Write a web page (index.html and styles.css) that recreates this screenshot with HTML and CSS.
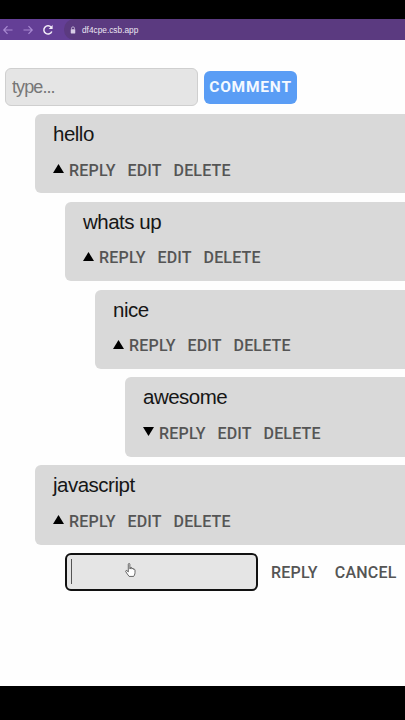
FILE: index.html
```html
<!DOCTYPE html>
<html lang="en">
<head>
  <meta charset="UTF-8">
  <meta name="viewport" content="width=device-width, initial-scale=1.0">
  <title>Comments</title>
  <link rel="stylesheet" href="styles.css">
</head>
<body>
  <div class="screen">
    <!-- Browser bar -->
    <div class="top-black"></div>
    <div class="browser-bar">
      <svg class="nav-icon" viewBox="0 0 12 12" width="12" height="12"><path d="M10.500 6H2M5.500 2.200 1.800 6l3.700 3.800" fill="none" stroke="#a98ad2" stroke-width="1.200"/></svg>
      <svg class="nav-icon" viewBox="0 0 12 12" width="12" height="12"><path d="M1.500 6H10M6.500 2.200 10.200 6l-3.700 3.800" fill="none" stroke="#a98ad2" stroke-width="1.200"/></svg>
      <svg class="nav-icon" viewBox="0 0 12 12" width="12" height="12"><path d="M9.800 7.400A4.100 4.100 0 1 1 9.200 3.400" fill="none" stroke="#f3eef8" stroke-width="1.500"/><path d="M10.600 1v3.900H6.700z" fill="#f3eef8"/></svg>
      <div class="address">
        <svg viewBox="0 0 8 10" width="6" height="8"><path d="M2 4V2.800a2 2 0 0 1 4 0V4" fill="none" stroke="#d8cde6" stroke-width="1"/><rect x="1" y="4" width="6" height="5.500" rx=".6" fill="#d8cde6"/></svg>
        <span>df4cpe.csb.app</span>
      </div>
    </div>

    <div class="page">
      <!-- New comment -->
      <div class="new-comment">
        <input class="comment-input" type="text" placeholder="type...">
        <button class="comment-btn">COMMENT</button>
      </div>

      <div class="comment-box">
        <div class="comment-text">hello</div>
        <div class="actions">
          <svg class="arrow" viewBox="0 0 11 9" width="11" height="9"><path d="M5.500 0 11 9H0z"/></svg>
          <span class="action">REPLY</span><span class="action">EDIT</span><span class="action">DELETE</span>
        </div>
      </div>
      <div class="nested">
        <div class="comment-box">
          <div class="comment-text">whats up</div>
          <div class="actions">
            <svg class="arrow" viewBox="0 0 11 9" width="11" height="9"><path d="M5.500 0 11 9H0z"/></svg>
            <span class="action">REPLY</span><span class="action">EDIT</span><span class="action">DELETE</span>
          </div>
        </div>
        <div class="nested">
          <div class="comment-box">
            <div class="comment-text">nice</div>
            <div class="actions">
              <svg class="arrow" viewBox="0 0 11 9" width="11" height="9"><path d="M5.500 0 11 9H0z"/></svg>
              <span class="action">REPLY</span><span class="action">EDIT</span><span class="action">DELETE</span>
            </div>
          </div>
          <div class="nested">
            <div class="comment-box">
              <div class="comment-text">awesome</div>
              <div class="actions">
                <svg class="arrow" viewBox="0 0 11 9" width="11" height="9"><path d="M0 0h11L5.500 9z"/></svg>
                <span class="action">REPLY</span><span class="action">EDIT</span><span class="action">DELETE</span>
              </div>
            </div>
          </div>
        </div>
      </div>

      <div class="comment-box">
        <div class="comment-text">javascript</div>
        <div class="actions">
          <svg class="arrow" viewBox="0 0 11 9" width="11" height="9"><path d="M5.500 0 11 9H0z"/></svg>
          <span class="action">REPLY</span><span class="action">EDIT</span><span class="action">DELETE</span>
        </div>
      </div>

      <!-- Reply form -->
      <div class="reply-form">
        <div class="reply-input">
          <span class="caret"></span>
          <svg class="hand" viewBox="0 0 12 16" width="11" height="16"><path d="M3.600 1.800c0-1.200 1.700-1.200 1.700 0v5l.6-.2V5.900c0-1 1.500-1 1.500 0v1l.5-.1c.2-.9 1.500-.8 1.500.2v.4c.5-.4 1.500-.2 1.500.7v2.700c0 2-1.100 3.700-1.500 4.200H4.500C3.400 13.600 1.700 11.300.9 9.900.4 9 1.300 8 2.200 8.800l1.400 1.300z" fill="#fff" stroke="#333" stroke-width=".8"/></svg>
        </div>
        <span class="action reply-action">REPLY</span>
        <span class="action reply-action">CANCEL</span>
      </div>
    </div>

    <div class="bottom-black"></div>
  </div>
</body>
</html>
```

FILE: styles.css
```css
* {
  box-sizing: border-box;
}

body {
  margin: 0;
  background-color: #fff;
  font-family: "Liberation Sans", Arial, sans-serif;
}

.screen {
  width: 405px;
  height: 720px;
  display: flex;
  flex-direction: column;
  overflow: hidden;
}

.top-black {
  height: 19px;
  background-color: #000;
}

.browser-bar {
  height: 21px;
  background-color: #643f96;
  display: flex;
  align-items: center;
  padding-left: 2px;
  gap: 8px;
}

.address {
  flex: 1;
  align-self: stretch;
  display: flex;
  align-items: center;
  gap: 6px;
  margin-left: 2px;
  padding-left: 6px;
  background-color: #5b3a80;
  border-radius: 10px 0 0 10px;
  font-size: 8.300px;
  color: #ebe5f2;
}

.page {
  flex: 1;
  padding: 28px 0 0 5px;
  background-color: #fefefe;
}

.new-comment {
  display: flex;
  align-items: center;
  gap: 6px;
  margin-bottom: 8px;
}

.comment-input {
  width: 193px;
  height: 38px;
  padding: 0 6px;
  background-color: #e5e5e5;
  border: 1px solid #cfcfcf;
  border-radius: 6px;
  font-family: inherit;
  font-size: 18px;
  letter-spacing: -0.9px;
}

.comment-input::placeholder {
  color: #777;
  opacity: 1;
}

.comment-btn {
  width: 93px;
  height: 33px;
  padding: 0;
  background-color: #5a9df5;
  color: #f5f9ff;
  border: none;
  border-radius: 6px;
  font-family: Roboto, Arial, sans-serif;
  font-size: 15.500px;
  font-weight: 700;
  letter-spacing: 0.8px;
}

.comment-box {
  width: 500px;
  height: 79.400px;
  margin: 0 0 8.400px 30px;
  padding: 8px 18px;
  background-color: #d9d9d9;
  border-radius: 6px;
}

.nested {
  margin-left: 30px;
}

.comment-text {
  height: 24px;
  font-size: 20.500px;
  line-height: 24px;
  letter-spacing: -0.5px;
  color: #161616;
}

.actions {
  display: flex;
  align-items: center;
  margin-top: 14px;
  height: 20px;
}

.arrow {
  flex-shrink: 0;
  margin: 0 5px 3px 0;
}

.action {
  margin-right: 11.700px;
  font-family: Roboto, Arial, sans-serif;
  font-size: 16px;
  font-weight: 500;
  letter-spacing: 0.2px;
  color: #555;
}

.reply-form {
  display: flex;
  align-items: center;
  margin: 0 0 0 60px;
}

.reply-input {
  flex-shrink: 0;
  width: 193px;
  height: 38px;
  background-color: #e5e5e5;
  border: 2.500px solid #111;
  border-radius: 6px;
  margin-right: 13px;
  position: relative;
}

.caret {
  position: absolute;
  left: 4px;
  top: 4px;
  width: 1px;
  height: 25px;
  background-color: #555;
}

.hand {
  position: absolute;
  left: 58px;
  top: 7px;
}

.reply-action {
  margin-right: 0;
  padding-top: 2px;
}

.reply-action + .reply-action {
  margin-left: 17px;
}

.bottom-black {
  height: 34px;
  background-color: #000;
}
```
